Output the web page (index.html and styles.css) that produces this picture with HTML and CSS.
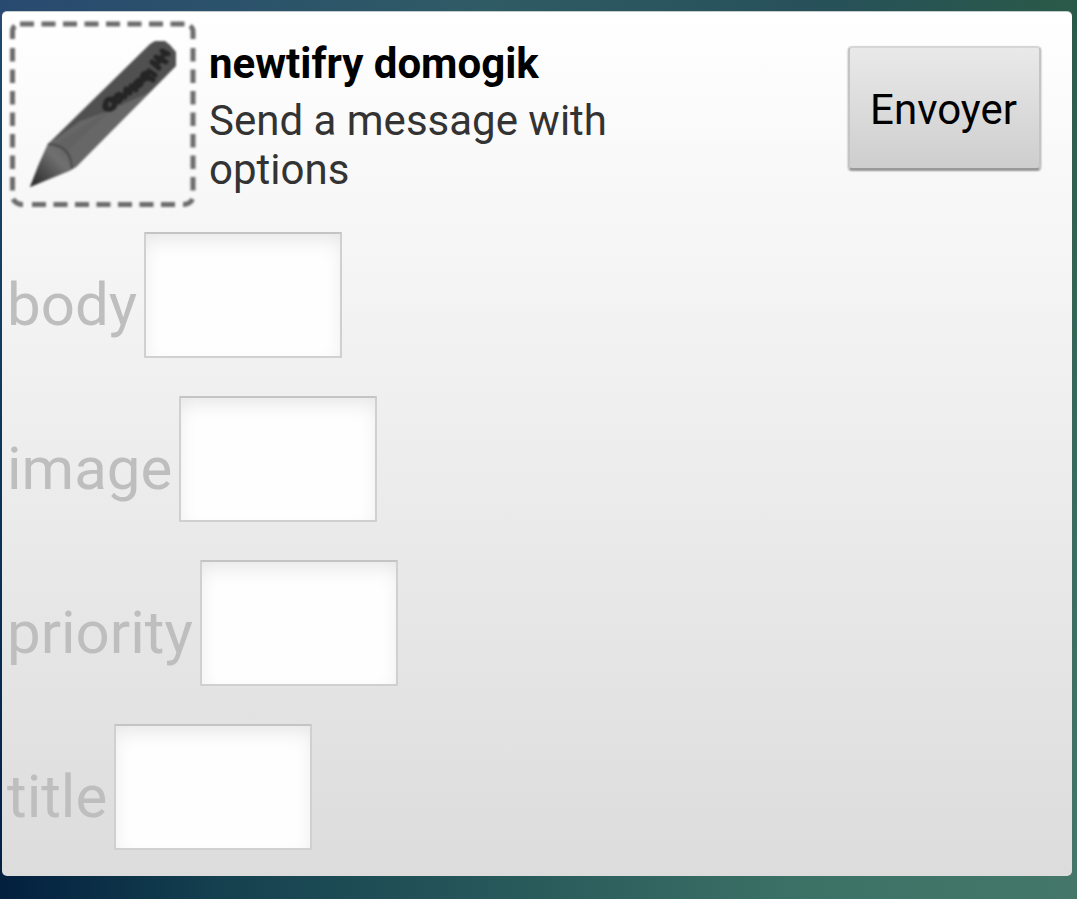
FILE: index.html
```html
<!DOCTYPE html>
<html lang="fr">
<head>
<meta charset="utf-8">
<meta name="viewport" content="width=device-width, initial-scale=1">
<title>newtifry domogik</title>
<link rel="stylesheet" href="styles.css">
</head>
<body>
<form class="card">
  <header class="head">
    <svg class="icon" viewBox="0 0 188 188" aria-hidden="true">
      <defs>
        <linearGradient id="tip" x1="0" y1="1" x2="1" y2="0">
          <stop offset="0" stop-color="#252525"/>
          <stop offset=".65" stop-color="#707070"/>
          <stop offset="1" stop-color="#606060"/>
        </linearGradient>
      </defs>
      <g fill="none" stroke="#6c6c6c" stroke-width="5">
        <path d="M12 3H178" stroke-dasharray="14 7.500"/>
        <path d="M24 183.500H172" stroke-dasharray="14 7.500"/>
        <path d="M4.500 27V175" stroke-dasharray="13.500 8"/>
        <path d="M185 27V175" stroke-dasharray="13.500 8"/>
        <path d="M4.500 18V10Q4.500 7 7 5M182 5Q185 7 185 10V18M5 178Q8 183.500 15 183.500M184.500 178Q182 183.500 175 183.500"/>
      </g>
      <path d="M40 123L142 23L147 20H157L162 24L168 31V45L68 146L61 150L22 166L31 143Z" fill="#505050"/>
      <path d="M40 123L72 100L100 90L140 72L162 51L67 146L61 149L48 126Z" fill="#676767"/>
      <path d="M48 123L98 91L101 91L54 135Z" fill="#626262"/>
      <path d="M40 123Q63 124 64 148L22 166L31 143Z" fill="url(#tip)"/>
      <path d="M40 123Q63 124 64 148" fill="none" stroke="#484848" stroke-width="2"/>
      <path d="M98 81Q94 90 103 88Q110 85 103 78Q97 78 98 84M107 80Q112 83 114 75Q111 71 107 77M113 75L117 76L118 68L122 72L123 65L128 69M127 63Q132 68 134 60Q131 57 127 63M134 57Q140 61 139 52Q134 52 134 58M138 55L145 59M141 50L147 54M144 41L151 47M148 44L155 35M148 36L158 41M154 30L160 33" fill="none" stroke="#252525" stroke-width="5" stroke-linecap="round" stroke-linejoin="round"/>
    </svg>
    <div class="text">
      <h1 class="title">newtifry domogik</h1>
      <p class="description">Send a message with options</p>
    </div>
    <button class="send" type="button">Envoyer</button>
  </header>
  <div class="fields">
    <div class="field"><label class="label" for="body">body</label><input class="input" id="body" type="text"></div>
    <div class="field"><label class="label" for="image">image</label><input class="input" id="image" type="text"></div>
    <div class="field"><label class="label" for="priority">priority</label><input class="input" id="priority" type="text"></div>
    <div class="field"><label class="label" for="title">title</label><input class="input" id="title" type="text"></div>
  </div>
</form>
</body>
</html>
```
FILE: styles.css
```css
* { box-sizing: border-box; }
html { min-height: 100%; }
body {
  margin: 0;
  padding: 11px 5px 23px 2px;
  font-family: Roboto, "Liberation Sans", sans-serif;
  background:
    linear-gradient(90deg, #284a70, #2f5b65 45%, #27505a 75%, #2a5a48) top / 100% 30px no-repeat,
    linear-gradient(90deg, #03203f, #14404f 20%, #3c7266 75%, #44776a) bottom / 100% 40px no-repeat,
    linear-gradient(#1f4a70, #00204a) left / 10px 100% no-repeat,
    linear-gradient(#2c5a4a, #44776a) right / 10px 100% no-repeat;
}
.card {
  padding: 9px 6px 26px;
  border-top: 1px solid #c3cbcd;
  border-radius: 5px;
  background: linear-gradient(#ffffff, #dcdcdc);
}
.head {
  display: flex;
  align-items: flex-start;
  padding-right: 25px;
}
.icon {
  flex: none;
  width: 188px;
  height: 188px;
  filter: blur(1px);
}
.text {
  flex: 1;
  min-width: 0;
  padding: 18px 0 0 13px;
}
.title {
  margin: 0 0 7px;
  font-size: 42px;
  line-height: 50px;
  font-weight: 700;
  color: #000;
}
.description {
  max-width: 480px;
  margin: 0;
  font-size: 42px;
  line-height: 49px;
  color: #333;
}
.send {
  flex: none;
  width: 193px;
  height: 124px;
  margin-top: 25px;
  padding: 4px 2px 0 0;
  font: 42px/50px Roboto, "Liberation Sans", sans-serif;
  color: #000;
  background: linear-gradient(#e9e9e9, #cecece);
  border: 2px solid #c4c4c4;
  border-top-color: #d6d6d6;
  border-bottom-color: #999;
  border-radius: 4px;
  box-shadow: 0 1px 2px rgba(0, 0, 0, .4);
}
.fields {
  display: flex;
  flex-direction: column;
  gap: 38px;
  margin-left: -1px;
  padding-top: 23px;
}
.field {
  display: flex;
  align-items: center;
  gap: 7px;
}
.label {
  padding-top: 20px;
  font-size: 60px;
  line-height: 70px;
  color: #bebebe;
}
.input {
  width: 198px;
  height: 126px;
  padding: 8px 16px;
  font: 42px/50px Roboto, "Liberation Sans", sans-serif;
  color: #000;
  background: #fefefe;
  border: 2px solid #d0d0d0;
  border-top: 2px solid #c4c4c4;
  border-radius: 1px;
  box-shadow: inset 0 9px 20px -4px rgba(0, 0, 0, .1);
}
```
